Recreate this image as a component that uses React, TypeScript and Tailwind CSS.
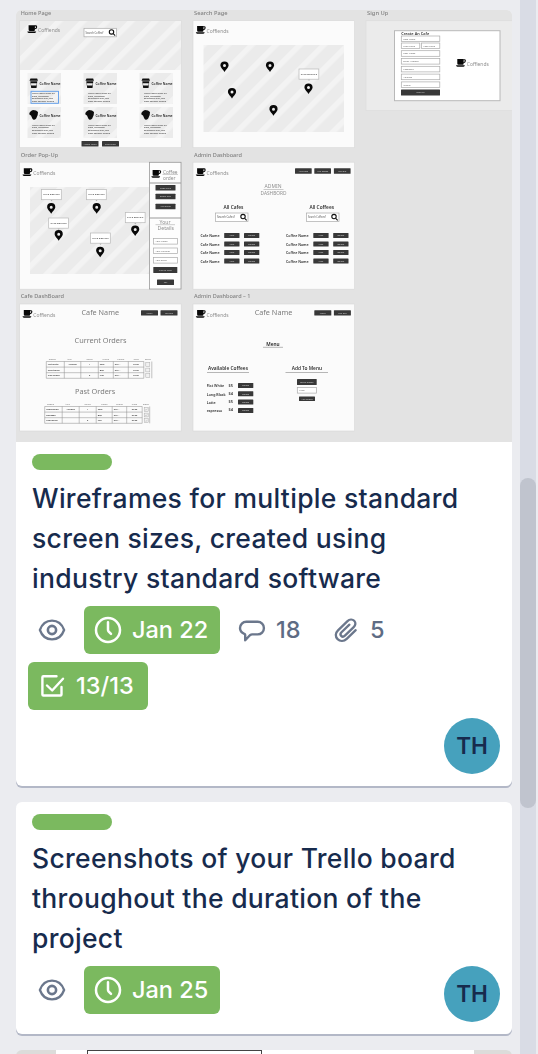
import type { ReactNode } from 'react';

type TextProps = {
  x: number;
  y: number;
  size: number;
  w?: number;
  fill?: string;
  weight?: number;
  children: string;
};

function T({ x, y, size, w, fill = '#8f8f8f', weight = 400, children }: TextProps) {
  return (
    <text
      x={x}
      y={y}
      fontSize={size}
      fill={fill}
      fontWeight={weight}
      textLength={w}
      lengthAdjust="spacingAndGlyphs"
    >
      {children}
    </text>
  );
}

function Artboard({ x, y, label, w }: { x: number; y: number; label: string; w: number }) {
  return (
    <>
      <T x={x + 1} y={y - 5.6} size={5.8} w={w} fill="#808080" weight={500}>{label}</T>
      <rect x={x} y={y} width={161.5} height={127} fill="#fbfbfb" stroke="#d8d8d8" strokeWidth={0.6} />
    </>
  );
}

function Cup({ x, y }: { x: number; y: number }) {
  return (
    <g transform={`translate(${x} ${y})`} fill="#080808">
      <path d="M1.300 0H7.600V4.700Q7.600 5.700 6.600 5.700H2.500Q1.300 5.700 1.300 4.500z" />
      <path d="M7.300.7H8.400Q9.300.7 9.300 1.600V2.100Q9.300 3.500 7.300 3.600" fill="none" stroke="#080808" strokeWidth={1.100} />
      <path d="M0 6.300H8.900Q8.700 7.700 7.500 7.700H1.400Q.2 7.700 0 6.300z" />
    </g>
  );
}

function Logo({ x, y }: { x: number; y: number }) {
  return (
    <>
      <Cup x={x} y={y} />
      <T x={x + 10.8} y={y + 6.5} size={5} w={22}>Coffiends</T>
    </>
  );
}

function Pin({ x, y }: { x: number; y: number }) {
  return (
    <path
      transform={`translate(${x} ${y})`}
      fill="#080808"
      fillRule="evenodd"
      d="M0 0C-1.200-2.300-4.100-4.300-4.100-6.500a4.100 4.100 0 0 1 8.200 0C4.100-4.300 1.200-2.300 0 0zM0-8a1.500 1.500 0 1 0 0 3A1.500 1.500 0 0 0 0-8z"
    />
  );
}

function Callout({ x, y }: { x: number; y: number }) {
  return (
    <>
      <rect x={x} y={y} width={19.8} height={10.2} fill="#fff" stroke="#b8b8b8" strokeWidth={0.7} />
      <path d={`M${x + 9} ${y + 10.7}h2l-1 1z`} fill="#999" />
      <T x={x + 1.8} y={y + 5.9} size={2.2} w={16.2} fill="#444" weight={600}>CAFE DETAILS</T>
    </>
  );
}

function Button({ x, y, w, h = 5.4, children }: { x: number; y: number; w: number; h?: number; children: string }) {
  return (
    <>
      <rect x={x} y={y} width={w} height={h} rx={0.5} fill="#383838" />
      <text x={x + w / 2} y={y + h / 2 + 0.8} fontSize={2.2} fill="#ccc" textAnchor="middle">{children}</text>
    </>
  );
}

function Field({ x, y, w, children }: { x: number; y: number; w: number; children: string }) {
  return (
    <>
      <rect x={x} y={y} width={w} height={5.6} fill="#fff" stroke="#aaa" strokeWidth={0.7} />
      <T x={x + 2} y={y + 3.7} size={2.3} fill="#666">{children}</T>
    </>
  );
}

function Search({ x, y, children }: { x: number; y: number; children: string }) {
  return (
    <>
      <rect x={x} y={y} width={32.5} height={8.5} fill="#fff" stroke="#aaa" strokeWidth={0.7} />
      <T x={x + 1.5} y={y + 5.3} size={2.8} w={18} fill="#555">{children}</T>
      <g fill="none" stroke="#111" strokeWidth={1.1}>
        <circle cx={x + 27.5} cy={y + 3.6} r={2.2} />
        <path d={`M${x + 29.2} ${y + 5.3}l2 2`} />
      </g>
    </>
  );
}

function CoffeeCard({ x, y, mug, selected }: { x: number; y: number; mug?: boolean; selected?: boolean }) {
  return (
    <>
      <rect x={x} y={y} width={33.5} height={31} fill="url(#stripes)" />
      {mug ? (
        <path
          transform={`translate(${x + 1.5} ${y + 3})`}
          fill="#0d0d0d"
          d="M2 1L4 0l3 .6L9 2l-.3 3-1.500 3.500Q6 9.800 5 9.800T3.300 8.500L2 5.500Q0 5 .3 3z"
        />
      ) : (
        <g transform={`translate(${x + 2} ${y + 5.5})`} fill="#111">
          <path d="M1 0h6.600l.9 2.300H0z" />
          <path d="M.8 2.700h7L7 9.500H1.700z" />
          <path d="M1.400 4.700h5.900L7 7H1.700z" fill="#eee" />
        </g>
      )}
      <T x={x + 12} y={y + (mug ? 10.2 : 11.5)} size={3.6} w={21} fill="#2c2c2c" weight={600}>Coffee Name</T>
      {['Lorem ipsum dolor sit', 'amet, consetetur', 'sadipscing elitr, sed', 'diam nonumy eirmod'].map((line, i) => (
        <T key={line} x={x + 4.5} y={y + (mug ? 18.6 : 21) + i * 2.7} size={2.3} w={[22.5, 17, 21, 22][i]} fill="#444" weight={500}>
          {line}
        </T>
      ))}
      {selected && <rect x={x + 3.5} y={y + 18.3} width={27.5} height={12} fill="none" stroke="#5b9bea" strokeWidth={0.9} />}
    </>
  );
}

function OrderTable({ x, y, past }: { x: number; y: number; past?: boolean }) {
  const cols = past ? [0, 17.5, 34.5, 51.5, 67.5, 82, 97.5, 105] : [0, 18, 34.5, 52, 67, 82, 97.5, 105.5];
  const names = past ? ['Cappuccino', 'Espresso', 'Long Black'] : ['Flat White', 'Short Black', 'Iced Coffee'];
  const rows = names.map((n, i) => [n, i ? '–' : 'Almond', ['1', '–', '2'][i], ['Sam', 'Bob', 'Tim'][i], '045...', '07:30']);
  const centred = (c: number) => c === 1 || c === 2 || c === 5;
  return (
    <>
      {['Coffee', 'Milk', 'Sugar', 'Name', 'Phone', 'Time', 'Done'].map((h, i) => (
        <text key={h} x={x + (cols[i] + cols[i + 1]) / 2 - (i < 2 ? 3 : 0)} y={y - 2} fontSize={2.3} textAnchor="middle" fill="#777">{h}</text>
      ))}
      <g stroke="#888" strokeWidth={0.5} fill="none">
        {[0, 5.6, 11.2, 16.8].map((r) => <path key={r} d={`M${x} ${y + r}h${cols[6]}`} />)}
        {cols.map((c) => <path key={c} d={`M${x + c} ${y}v16.800`} />)}
      </g>
      {rows.map((row, r) => (
        <g key={row[0]}>
          {row.map((cell, c) => (
            <text
              key={c}
              x={x + (centred(c) ? (cols[c] + cols[c + 1]) / 2 : cols[c] + 1.5)}
              textAnchor={centred(c) ? 'middle' : 'start'}
              y={y + 3.7 + r * 5.6}
              fontSize={2.2}
              fontWeight={600}
              fill="#333"
            >
              {cell}
            </text>
          ))}
          <rect x={x + cols[6] + 2} y={y + 1 + r * 5.6} width={4} height={3.8} fill="#f1f1f1" stroke="#aaa" strokeWidth={0.5} />
          {past && <path d={`M${x + cols[6] + 3} ${y + 3 + r * 5.6}l.8.8 1.300-1.600`} fill="none" stroke="#999" strokeWidth={0.4} />}
        </g>
      ))}
    </>
  );
}

function WireframeCover() {
  return (
    <svg viewBox="16 10 496 432" className="block h-[432px] w-[496px] blur-[0.45px]" fontFamily="'Noto Sans', 'Open Sans', sans-serif">
      <defs>
        <pattern id="stripes" width="17" height="17" patternUnits="userSpaceOnUse" patternTransform="rotate(45) translate(3 0)">
          <rect width="17" height="17" fill="#ebebeb" />
          <rect width="5.500" height="17" fill="#f3f3f3" />
        </pattern>
      </defs>
      <rect x="14" y="8" width="500" height="436" fill="#e3e3e3" />

      <Artboard x={19.7} y={20.7} label="Home Page" w={30.5} />
      <rect x={20} y={21} width={161} height={49} fill="url(#stripes)" />
      <Logo x={27.3} y={25.2} />
      <Search x={84} y={28.3}>Search Coffee?</Search>
      {[27.5, 83.5, 139.5].map((x, i) => <CoffeeCard key={x} x={x} y={73} selected={i === 0} />)}
      {[27.5, 83.5, 139.5].map((x) => <CoffeeCard key={x} x={x} y={107} mug />)}
      <Button x={81.5} y={141} w={17}>Admin Login</Button>
      <Button x={102} y={141} w={17}>Cafe Login</Button>

      <Artboard x={193} y={20.7} label="Search Page" w={33.5} />
      <Logo x={195.8} y={26} />
      <rect x={203.5} y={45} width={140.5} height={87} fill="url(#stripes)" />
      <Callout x={299} y={69} />
      <Pin x={224.5} y={72} /><Pin x={270} y={72} /><Pin x={308.5} y={94} /><Pin x={232} y={98.5} /><Pin x={273.5} y={115.7} />

      <T x={367} y={15.1} size={5.8} w={21.5} fill="#808080" weight={500}>Sign Up</T>
      <rect x={366} y={20.7} width={150} height={90} fill="#ebebeb" stroke="#dcdcdc" strokeWidth={0.7} />
      <rect x={394.5} y={30.7} width={105.5} height={70} fill="#fff" stroke="#b8b8b8" strokeWidth={1} />
      <T x={401.2} y={34.9} size={4.2} w={28} fill="#333" weight={600}>Create An Cafe</T>
      <Field x={401.3} y={36} w={38.5}>Cafe Name</Field>
      <Field x={401.3} y={43} w={18.5}>First Name</Field>
      <Field x={421.5} y={43} w={18.3}>Last Name</Field>
      {['User Name', 'Email Address', 'Password', 'Address', 'Mobile'].map((f, i) => (
        <Field key={f} x={401.3} y={50.7 + i * 7.8} w={38.5}>{f}</Field>
      ))}
      <Button x={401} y={89.5} w={39} h={6}>Sign Up</Button>
      <Logo x={456} y={59} />

      <Artboard x={19.7} y={162.2} label="Order Pop-Up" w={37.5} />
      <Logo x={22.5} y={168.2} />
      <rect x={30} y={187} width={119.5} height={87} fill="url(#stripes)" />
      <Callout x={41.5} y={189.5} /><Callout x={86.5} y={189.5} /><Callout x={48.7} y={218} /><Callout x={125.3} y={212.5} /><Callout x={90.5} y={233} />
      <Pin x={51.2} y={213.7} /><Pin x={96.7} y={213.7} /><Pin x={58.7} y={240.7} /><Pin x={135.2} y={236} /><Pin x={100.2} y={257.3} />
      <rect x={149.5} y={162.3} width={31.5} height={126.7} fill="#fdfdfd" stroke="#999" strokeWidth={0.8} />
      <path d="M149.500 183h31.500M149.500 218h31.500" stroke="#999" strokeWidth={1} />
      <Cup x={151.3} y={170} />
      <T x={163} y={173.5} size={5} w={14.5}>Coffee</T>
      <T x={163} y={180.3} size={5} w={12.5}>order</T>
      <path d="M162.500 174.500h15.500M155.500 224.700h19.500" stroke="#888" strokeWidth={0.4} />
      <Button x={155.5} y={185} w={20}>Coffe Type</Button>
      <Button x={155.5} y={193.8} w={20}>Select milk</Button>
      <Button x={155.5} y={203.8} w={20}>Add Sugar</Button>
      <T x={159.5} y={223.5} size={5} w={11}>Your</T>
      <T x={157.5} y={230.3} size={5} w={16.5}>Details</T>
      <Field x={153.5} y={238.5} w={24}>Your Name</Field>
      <Field x={153.5} y={248} w={24}>Your Number</Field>
      <Field x={153.5} y={257.5} w={24}>Your Email</Field>
      <Button x={153.3} y={267} w={24} h={6}>Pick up Time</Button>
      <Button x={157} y={279.5} w={17}>Pay</Button>

      <Artboard x={193} y={162.2} label="Admin Dashboard" w={48} />
      <Logo x={195.8} y={168.2} />
      <Button x={295} y={168.3} w={16.7}>Add Cafe</Button>
      <Button x={314.3} y={168.3} w={16.7}>Add Coffee</Button>
      <Button x={333.9} y={168.3} w={16.7}>Log Out</Button>
      <T x={264.5} y={188.3} size={4.5} w={17}>ADMIN</T>
      <path d="M263.500 189.500h20" stroke="#999" strokeWidth={0.5} />
      <T x={260.5} y={195} size={4.5} w={26}>DASHBORD</T>
      <T x={223.5} y={208.5} size={4.6} w={20} fill="#333" weight={600}>All Cafes</T>
      <T x={309.5} y={208.5} size={4.6} w={24.5} fill="#333" weight={600}>All Coffees</T>
      <Search x={215.5} y={213}>Search Cafes?</Search>
      <Search x={306.5} y={213}>Search Coffees?</Search>
      {[0, 1, 2, 3].map((i) => {
        const y = 233 + i * 8.5;
        return (
          <g key={i}>
            <T x={200.5} y={y + 4.2} size={3.6} w={19} fill="#333" weight={600}>Cafe Name</T>
            <Button x={224.2} y={y} w={15.3} h={5}>View</Button>
            <Button x={244} y={y} w={15.3} h={5}>Delete</Button>
            <T x={286} y={y + 4.2} size={3.6} w={22.5} fill="#333" weight={600}>Coffee Name</T>
            <Button x={313.3} y={y} w={15.3} h={5}>View</Button>
            <Button x={333.2} y={y} w={15.3} h={5}>Delete</Button>
          </g>
        );
      })}

      <Artboard x={19.7} y={304} label="Cafe DashBoard" w={43.3} />
      <Logo x={22.5} y={310} />
      <T x={81.5} y={315.3} size={7} w={37.5} fill="#7c7c7c">Cafe Name</T>
      <Button x={141} y={310.2} w={17}>Menu</Button>
      <Button x={160.5} y={310.2} w={17}>Log Out</Button>
      <T x={74.5} y={342.9} size={7} w={52} fill="#7c7c7c">Current Orders</T>
      <OrderTable x={46.3} y={361.5} />
      <T x={75} y={393.9} size={7} w={40.3} fill="#7c7c7c">Past Orders</T>
      <OrderTable x={44.7} y={406.5} past />

      <Artboard x={193} y={304} label="Admin Dashboard – 1" w={56.5} />
      <Logo x={195.8} y={310} />
      <T x={254.7} y={315.3} size={7} w={37.7} fill="#7c7c7c">Cafe Name</T>
      <Button x={314.3} y={310.2} w={17}>Menu</Button>
      <Button x={333.9} y={310.2} w={17}>Log Out</Button>
      <T x={266.3} y={345.8} size={4.6} w={13.3} fill="#222" weight={600}>Menu</T>
      <path d="M263 347.300h20M207 372.500h42M285.500 372.500h42.500" stroke="#888" strokeWidth={0.6} />
      <T x={208} y={370.3} size={4.6} w={40} fill="#333" weight={600}>Available Coffees</T>
      <T x={291.7} y={370.3} size={4.6} w={30.3} fill="#333" weight={600}>Add To Menu</T>
      {[['Flat White', '$5', 17.5], ['Long Black', '$4', 19], ['Latte', '$5', 9], ['espresso', '$4', 15.5]].map(([name, price, w], i) => (
        <g key={name}>
          <T x={206.7} y={387.3 + i * 8.2} size={3.6} w={Number(w)} fill="#333" weight={600}>{String(name)}</T>
          <T x={228.5} y={386.7 + i * 8.2} size={3.5} w={4.5} fill="#333" weight={600}>{String(price)}</T>
          <Button x={238} y={383 + i * 8.3} w={15.3} h={5}>Delete</Button>
        </g>
      ))}
      <Button x={297} y={379} w={19.7} h={6}>Select Coffee</Button>
      <Field x={297.3} y={387.5} w={19.3}>Price</Field>
      <Button x={299} y={396.5} w={16} h={4.5}>Add Coffee</Button>
    </svg>
  );
}

function EyeIcon() {
  return (
    <svg viewBox="0 0 32 32" className="size-8 shrink-0" fill="none" stroke="#6b778c" strokeWidth="2.300">
      <path d="M3.900 16C6 10 10.500 6.600 16 6.600S26 10 28.100 16C26 22 21.500 25.400 16 25.400S6 22 3.900 16z" />
      <circle cx="16" cy="16" r="4.100" strokeWidth="2.600" />
    </svg>
  );
}

function ClockIcon() {
  return (
    <svg viewBox="0 0 32 32" className="size-8 shrink-0" fill="none" stroke="#fff" strokeWidth="2.500" strokeLinecap="round" strokeLinejoin="round">
      <circle cx="16" cy="16" r="12" />
      <path d="M16 8.300V16q0 .9.700 1.600l2.300 2.300" />
    </svg>
  );
}

function CommentIcon() {
  return (
    <svg viewBox="0 0 32 32" className="size-8 shrink-0" fill="none" stroke="#6b778c" strokeWidth="2.400" strokeLinejoin="round">
      <path d="M10.300 7.800h11.400a6.200 6.200 0 0 1 6.200 6.300a6.200 6.200 0 0 1-6.200 6.300h-5.500q-1.200 0-2.300.8L9.200 26.300V21q0-.9-.9-1.200C5.700 18.900 4 16.700 4 14.100a6.300 6.300 0 0 1 6.300-6.300z" />
    </svg>
  );
}

function ClipIcon() {
  return (
    <svg viewBox="0 0 32 32" className="size-8 shrink-0" fill="none" stroke="#6b778c" strokeWidth="2.300" strokeLinecap="round" strokeLinejoin="round">
      <path d="M25.700 16.200L16.700 24.800C13.900 27.500 10.100 27.600 7.600 25.200C5.100 22.700 5.200 19 8 16.300L17.500 7.100C19.500 5.200 22.500 5 24.200 6.700C26 8.500 25.700 11.300 23.700 13.200L14.900 21.700C13.700 22.900 12.200 22.900 11.200 21.900C10.200 20.900 10.300 19.500 11.500 18.300L19.400 10.700" />
    </svg>
  );
}

function ChecklistIcon() {
  return (
    <svg viewBox="0 0 32 32" className="size-8 shrink-0" fill="none" stroke="#fff" strokeWidth="2.400" strokeLinecap="round" strokeLinejoin="round">
      <path d="M20.500 6.200H7.400Q6.400 6.200 6.400 7.200V24.500Q6.400 25.500 7.400 25.500H24.500Q25.500 25.500 25.500 24.500V17" />
      <path d="M11 15.500L16.200 20.500L27 8.700" />
    </svg>
  );
}

function GreenBadge({ icon, width, children }: { icon: ReactNode; width: string; children: string }) {
  return (
    <span className={`flex h-12 ${width} items-center rounded-[6px] bg-[#7bb95f] pl-2 text-[23.5px] font-medium text-white`}>
      {icon}
      <span className="ml-2">{children}</span>
    </span>
  );
}

function Label() {
  return <div className="h-4 w-20 rounded-full bg-[#7bb95f]" />;
}

function Title({ lines }: { lines: string[] }) {
  return (
    <h2 className="mt-2 text-[26.5px] leading-10 font-[450] tracking-[0.3px] text-[#172b4d]">
      {lines.map((line) => <span key={line} className="block whitespace-nowrap">{line}</span>)}
    </h2>
  );
}

function Avatar() {
  return (
    <div className="flex size-14 shrink-0 items-center justify-center rounded-full bg-[#46a1bd] text-[22.5px] font-semibold text-[#172b4d]">TH</div>
  );
}

export default function App() {
  return (
    <div className="flex h-[1054px] w-[538px] overflow-hidden bg-[#ebecf0] font-[Inter,'Liberation_Sans',sans-serif]">
      <main className="ml-4 flex w-[496px] shrink-0 flex-col gap-4 pt-[10px]">
        <article className="h-[776px] shrink-0 overflow-hidden rounded-[6px] bg-white shadow-[0_2px_0_#b3b8c7]">
          <div className="h-[432px] overflow-hidden bg-[#e3e3e3]"><WireframeCover /></div>
          <div className="px-4 pt-3">
            <Label />
            <Title lines={['Wireframes for multiple standard', 'screen sizes, created using', 'industry standard software']} />
            <div className="mt-2 flex h-12 items-center pl-1 text-[23.5px] font-[450] text-[#5e6c84]">
              <EyeIcon />
              <div className="ml-4"><GreenBadge icon={<ClockIcon />} width="w-[136px]">Jan 22</GreenBadge></div>
              <div className="ml-4 flex w-[94px] items-center"><CommentIcon /><span className="ml-2">18</span></div>
              <div className="flex items-center"><ClipIcon /><span className="ml-2">5</span></div>
            </div>
            <div className="mt-2 -ml-1"><GreenBadge icon={<ChecklistIcon />} width="w-[120px]">13/13</GreenBadge></div>
            <div className="mt-2 -mr-1 flex justify-end"><Avatar /></div>
          </div>
        </article>

        <article className="h-[232px] shrink-0 rounded-[6px] bg-white px-4 pt-3 shadow-[0_2px_0_#b3b8c7]">
          <Label />
          <Title lines={['Screenshots of your Trello board', 'throughout the duration of the', 'project']} />
          <div className="mt-2 -mr-1 flex items-start justify-between pl-1">
            <div className="flex h-12 items-center">
              <EyeIcon />
              <div className="ml-4"><GreenBadge icon={<ClockIcon />} width="w-[136px]">Jan 25</GreenBadge></div>
            </div>
            <Avatar />
          </div>
        </article>

        <article className="flex h-20 shrink-0 overflow-hidden rounded-t-[6px] bg-[#dcdcda] pr-[38px] pl-10">
          <div className="flex-1 bg-white pl-[31px]">
            <div className="h-20 w-[175px] border border-[#444] bg-white" />
          </div>
        </article>
      </main>
      <div className="ml-2 h-full w-4 shrink-0 bg-[#d9dce5] pt-[478px]">
        <div className="h-[330px] w-4 rounded-full bg-[#c0c4ce]" />
      </div>
    </div>
  );
}
